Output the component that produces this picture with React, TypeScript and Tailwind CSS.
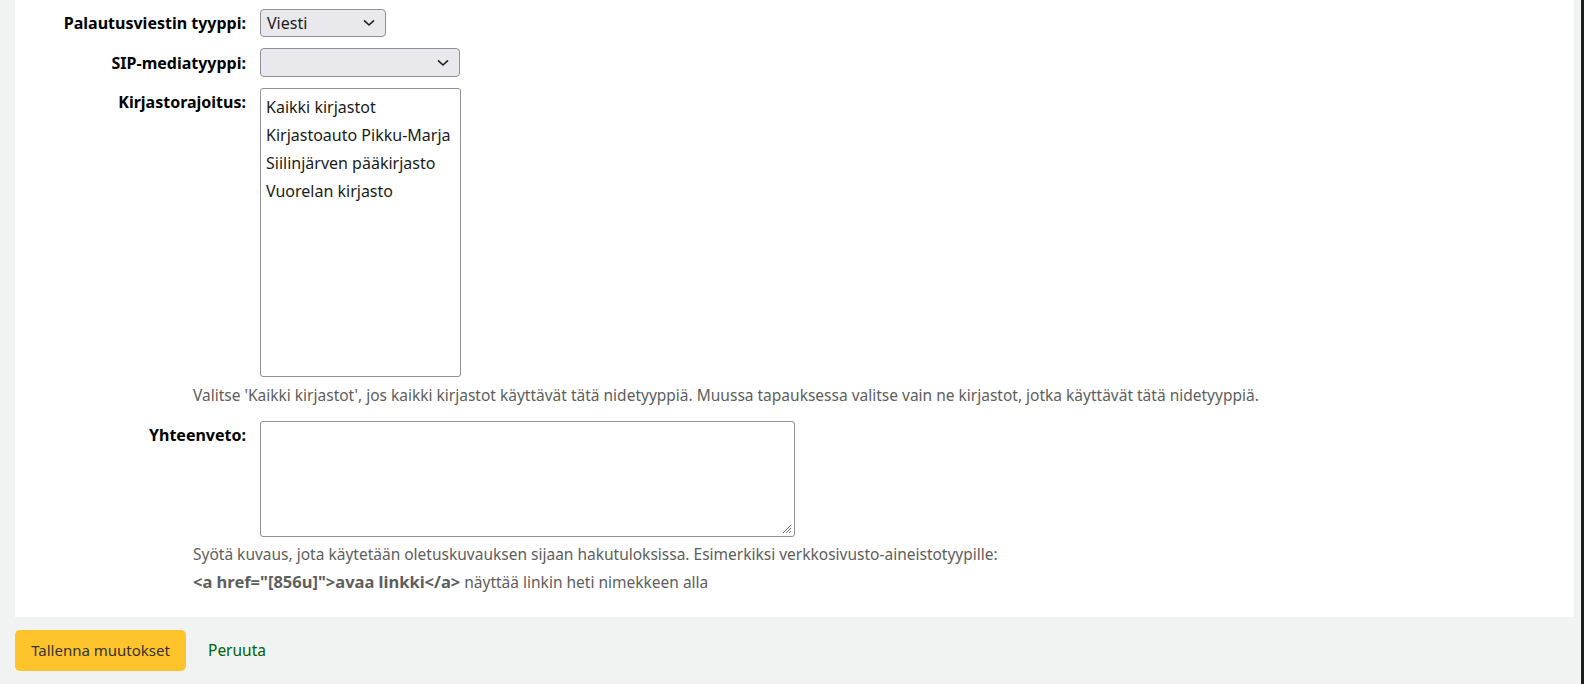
import React from "react";

const Chevron = () => (
  <svg width="12" height="8" viewBox="0 0 12 8" className="absolute right-[10px] top-1/2 -translate-y-1/2 pointer-events-none">
    <path d="M1.5 1.8 L6 6 L10.5 1.8" fill="none" stroke="#1f1f1f" strokeWidth="1.6" strokeLinecap="round" strokeLinejoin="round" />
  </svg>
);

function Label({ children, className = "" }: { children: React.ReactNode; className?: string }) {
  return (
    <div className={`w-[245px] shrink-0 pr-[14px] text-right font-bold text-[16px] text-black whitespace-nowrap ${className}`}>
      {children}
    </div>
  );
}

export default function App() {
  const libs = ["Kaikki kirjastot", "Kirjastoauto Pikku-Marja", "Siilinjärven pääkirjasto", "Vuorelan kirjasto"];
  return (
    <div
      className="flex h-[684px] w-full bg-[#f1f2f2] overflow-hidden"
      style={{ fontFamily: '"Noto Sans", "Open Sans", sans-serif' }}
    >
      <div className="flex-1 flex flex-col">
        <div className="ml-[15px] mr-[7px] bg-white h-[617px] flex flex-col pt-[9px]">
          {/* Row 1 */}
          <div className="flex items-center">
            <Label>Palautusviestin tyyppi:</Label>
            <div className="relative w-[126px] h-[28px] rounded-[4px] border border-[#8f8f9d] bg-[#e9e9ed] flex items-center pl-[6px] text-[16px] text-[#1b1b1b]">
              Viesti
              <Chevron />
            </div>
          </div>
          {/* Row 2 */}
          <div className="flex items-center mt-[11px]">
            <Label>SIP-mediatyyppi:</Label>
            <div className="relative w-[200px] h-[29px] rounded-[4px] border border-[#8f8f9d] bg-[#e9e9ed]">
              <Chevron />
            </div>
          </div>
          {/* Row 3 */}
          <div className="flex items-start mt-[11px]">
            <Label className="pt-[2px]">Kirjastorajoitus:</Label>
            <div className="w-[201px] h-[289px] rounded-[3px] border border-[#8f8f9d] bg-white pt-[4px] pl-[5px] text-[16px] text-[#1b1b1b]">
              {libs.map((l) => (
                <div key={l} className="h-[28px] leading-[28px] whitespace-nowrap">
                  {l}
                </div>
              ))}
            </div>
          </div>
          <div className="ml-[178px] mt-[6px] text-[15.5px] leading-[24px] text-[#5e5e5e] whitespace-nowrap">
            Valitse 'Kaikki kirjastot', jos kaikki kirjastot käyttävät tätä nidetyyppiä. Muussa tapauksessa valitse vain ne kirjastot, jotka käyttävät tätä nidetyyppiä.
          </div>
          {/* Row 4 */}
          <div className="flex items-start mt-[14px]">
            <Label className="pt-[2px]">Yhteenveto:</Label>
            <div className="relative w-[535px] h-[116px] rounded-[3px] border border-[#8f8f9d] bg-white">
              <svg width="11" height="11" viewBox="0 0 11 11" className="absolute right-[2px] bottom-[2px]">
                <path d="M10 2 L2 10 M10 5 L5 10 M10 8 L8 10" stroke="#6b6b6b" strokeWidth="1" />
              </svg>
            </div>
          </div>
          <div className="ml-[178px] mt-[4px] text-[15.5px] leading-[27px] text-[#5e5e5e] whitespace-nowrap">
            <div>Syötä kuvaus, jota käytetään oletuskuvauksen sijaan hakutuloksissa. Esimerkiksi verkkosivusto-aineistotyypille:</div>
            <div>
              <span className="font-bold text-[16.5px]">&lt;a href="[856u]"&gt;avaa linkki&lt;/a&gt;</span> näyttää linkin heti nimekkeen alla
            </div>
          </div>
        </div>
        <div className="ml-[15px] mt-[13px] flex items-center">
          <button className="h-[41px] w-[171px] rounded-[5px] bg-[#ffc32b] text-[15px] text-[#333]">Tallenna muutokset</button>
          <a className="ml-[22px] text-[15.5px] text-[#006100]">Peruuta</a>
        </div>
      </div>
      <div className="w-[3px] h-full bg-[#1c1c1c]" />
    </div>
  );
}
